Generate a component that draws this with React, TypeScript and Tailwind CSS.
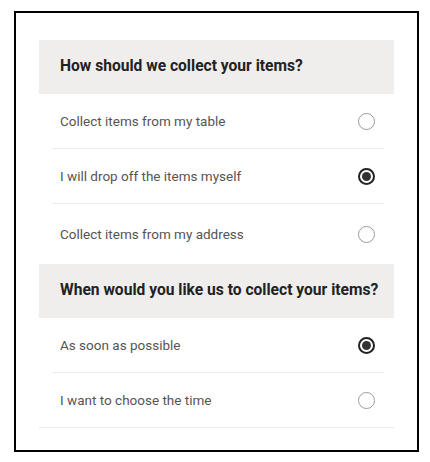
import React from 'react';

type Option = { label: string; checked: boolean };

const Radio = ({ checked }: { checked: boolean }) =>
  checked ? (
    <span className="flex h-[17px] w-[17px] items-center justify-center rounded-full border-2 border-[#222]">
      <span className="h-[9px] w-[9px] rounded-full bg-[#333]" />
    </span>
  ) : (
    <span className="h-[17px] w-[17px] rounded-full border-[1.5px] border-[#9a9a9a]" />
  );

const Row = ({ label, checked, divider, tall }: Option & { divider?: boolean; tall?: boolean }) => (
  <div>
    <div
      className={`flex items-center justify-between pl-[21px] pr-[19px] ${tall ? 'h-[60px] pt-[1px]' : 'h-[54px]'}`}
    >
      <span className="text-[13.5px] text-[#555]">{label}</span>
      <Radio checked={checked} />
    </div>
    {divider && <div className="ml-[13px] mr-[10px] h-px bg-[#ececec]" />}
  </div>
);

const Section = ({ title, options, tallLast }: { title: string; options: Option[]; tallLast?: boolean }) => (
  <div>
    <div className="flex h-[54px] items-center bg-[#efeeec] pl-[21px] pr-[2px]">
      <h2 className="whitespace-nowrap text-[15.6px] font-bold text-[#222]">{title}</h2>
    </div>
    {options.map((o, i) => (
      <Row
        key={o.label}
        {...o}
        divider={i < options.length - 1}
        tall={tallLast && i === options.length - 1}
      />
    ))}
  </div>
);

export default function App() {
  return (
    <div className="h-[462px] w-[430px] bg-white pl-[14px] pt-[11px]" style={{ fontFamily: 'Roboto, sans-serif' }}>
      <div className="h-[441px] w-[405px] border-2 border-black px-[23px] pt-[27px]">
        <Section
          title="How should we collect your items?"
          tallLast
          options={[
            { label: 'Collect items from my table', checked: false },
            { label: 'I will drop off the items myself', checked: true },
            { label: 'Collect items from my address', checked: false },
          ]}
        />
        <Section
          title="When would you like us to collect your items?"
          options={[
            { label: 'As soon as possible', checked: true },
            { label: 'I want to choose the time', checked: false },
          ]}
        />
        <div className="h-px bg-[#ececec]" />
      </div>
    </div>
  );
}
